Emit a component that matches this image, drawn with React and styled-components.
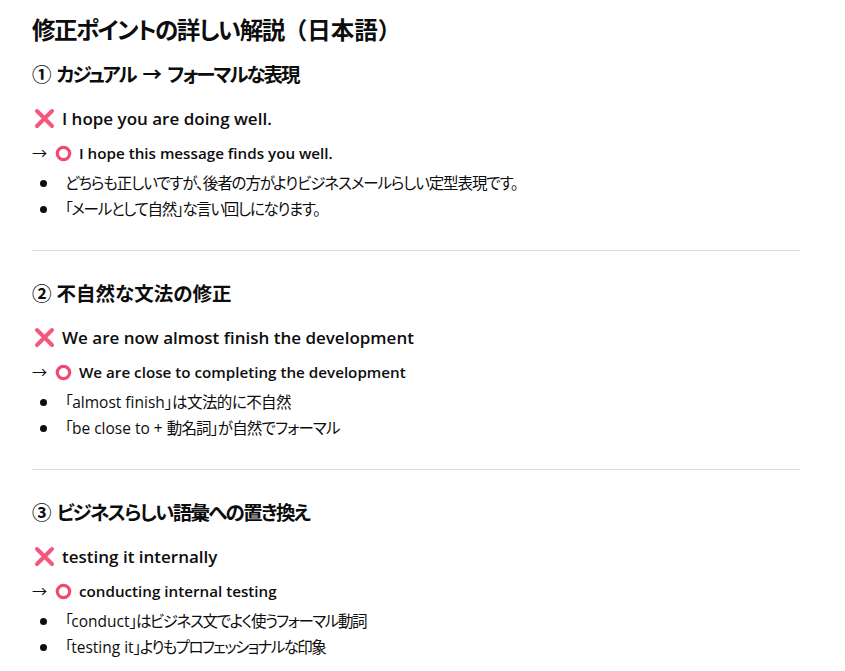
import React from "react";
import styled, { createGlobalStyle } from "styled-components";

const GlobalStyle = createGlobalStyle`
  html, body {
    margin: 0;
    background: #fff;
  }
  body {
    font-family: "Open Sans", "Noto Sans CJK JP", sans-serif;
    font-feature-settings: "palt";
    color: #0d0d0d;
  }
`;

const Page = styled.main`
  width: 768px;
  height: 671px;
  overflow: hidden;
  padding: 14px 0 0 32px;
`;

const Title = styled.h2`
  margin: 0 0 15px;
  font-size: 23.5px;
  line-height: 32px;
  font-weight: 600;
  letter-spacing: -1.5px;
`;

const FullWidth = styled.span`
  font-feature-settings: normal;
  letter-spacing: 0;
`;

const Heading = styled.h3`
  margin: 0 0 17px;
  font-size: 19.5px;
  line-height: 28px;
  font-weight: 600;
  letter-spacing: ${(p) => p.$track}px;
  word-spacing: ${(p) => p.$track * -2}px;
`;

const Wrong = styled.h4`
  display: flex;
  align-items: center;
  gap: 6px;
  margin: 0 0 9px;
  font-size: 17px;
  line-height: 26px;
  font-weight: 600;
`;

const Right = styled.p`
  display: flex;
  align-items: center;
  margin: 0 0 5px;
  font-size: 15.2px;
  line-height: 24px;
  font-weight: 600;
`;

const Arrow = styled.span`
  width: 23px;
  font-weight: 400;
`;

const Notes = styled.ul`
  margin: 0;
  padding: 0 0 0 8px;
  list-style: none;
  font-size: 15.5px;
  line-height: 26px;
`;

const Note = styled.li`
  display: flex;
  align-items: center;
  letter-spacing: ${(p) => p.$track}px;

  &::before {
    content: "";
    flex: none;
    width: 7px;
    height: 7px;
    margin-right: 18px;
    border-radius: 50%;
    background: #0d0d0d;
  }
`;

const Latin = styled.span`
  letter-spacing: 0;
`;

const Divider = styled.hr`
  width: 768px;
  margin: 28px 0 29px;
  border: 0;
  border-top: 1px solid #dcdcdc;
`;

const CrossIcon = () => (
  <svg width="24" height="24" viewBox="0 0 24 24" aria-hidden="true">
    <path d="M5 4 L20 19 M20 4 L5 19" stroke="#f4577e" strokeWidth="4" strokeLinecap="round" />
  </svg>
);

const Ring = styled.svg`
  margin-right: 7px;
`;

const CircleIcon = () => (
  <Ring width="17" height="17" viewBox="0 0 17 17" aria-hidden="true">
    <circle cx="8.5" cy="8.5" r="6.2" fill="none" stroke="#f04a70" strokeWidth="3.2" />
  </Ring>
);

const sections = [
  {
    heading: "① カジュアル → フォーマルな表現",
    track: -2,
    wrong: "I hope you are doing well.",
    right: "I hope this message finds you well.",
    notes: [
      { text: "どちらも正しいですが、後者の方がよりビジネスメールらしい定型表現です。", track: -1.1 },
      { text: "「メールとして自然」な言い回しになります。", track: -1.3 },
    ],
  },
  {
    heading: "② 不自然な文法の修正",
    track: 0,
    wrong: "We are now almost finish the development",
    right: "We are close to completing the development",
    notes: [
      { text: "「almost finish」は文法的に不自然", track: -0.55 },
      { text: "「be close to + 動名詞」が自然でフォーマル", track: -0.8 },
    ],
  },
  {
    heading: "③ ビジネスらしい語彙への置き換え",
    track: -1.7,
    wrong: "testing it internally",
    right: "conducting internal testing",
    notes: [
      { text: "「conduct」はビジネス文でよく使うフォーマル動詞", track: -1.4 },
      { text: "「testing it」よりもプロフェッショナルな印象", track: -1.6 },
    ],
  },
];

// Latin runs keep normal spacing, only the Japanese text is tightened
const NoteText = ({ text }) => (
  <span>
    {text.split(/([A-Za-z][A-Za-z +]*)/).map((part, i) =>
      i % 2 ? <Latin key={i}>{part}</Latin> : part
    )}
  </span>
);

export default function App() {
  return (
    <>
      <GlobalStyle />
      <Page>
        <Title>
          修正ポイントの詳しい解説<FullWidth>（日本語）</FullWidth>
        </Title>
        {sections.map((s, i) => (
          <section key={s.heading}>
            <Heading $track={s.track}>{s.heading}</Heading>
            <Wrong>
              <CrossIcon />
              {s.wrong}
            </Wrong>
            <Right>
              <Arrow>→</Arrow>
              <CircleIcon />
              {s.right}
            </Right>
            <Notes>
              {s.notes.map((n) => (
                <Note key={n.text} $track={n.track}>
                  <NoteText text={n.text} />
                </Note>
              ))}
            </Notes>
            {i < sections.length - 1 && <Divider />}
          </section>
        ))}
      </Page>
    </>
  );
}
